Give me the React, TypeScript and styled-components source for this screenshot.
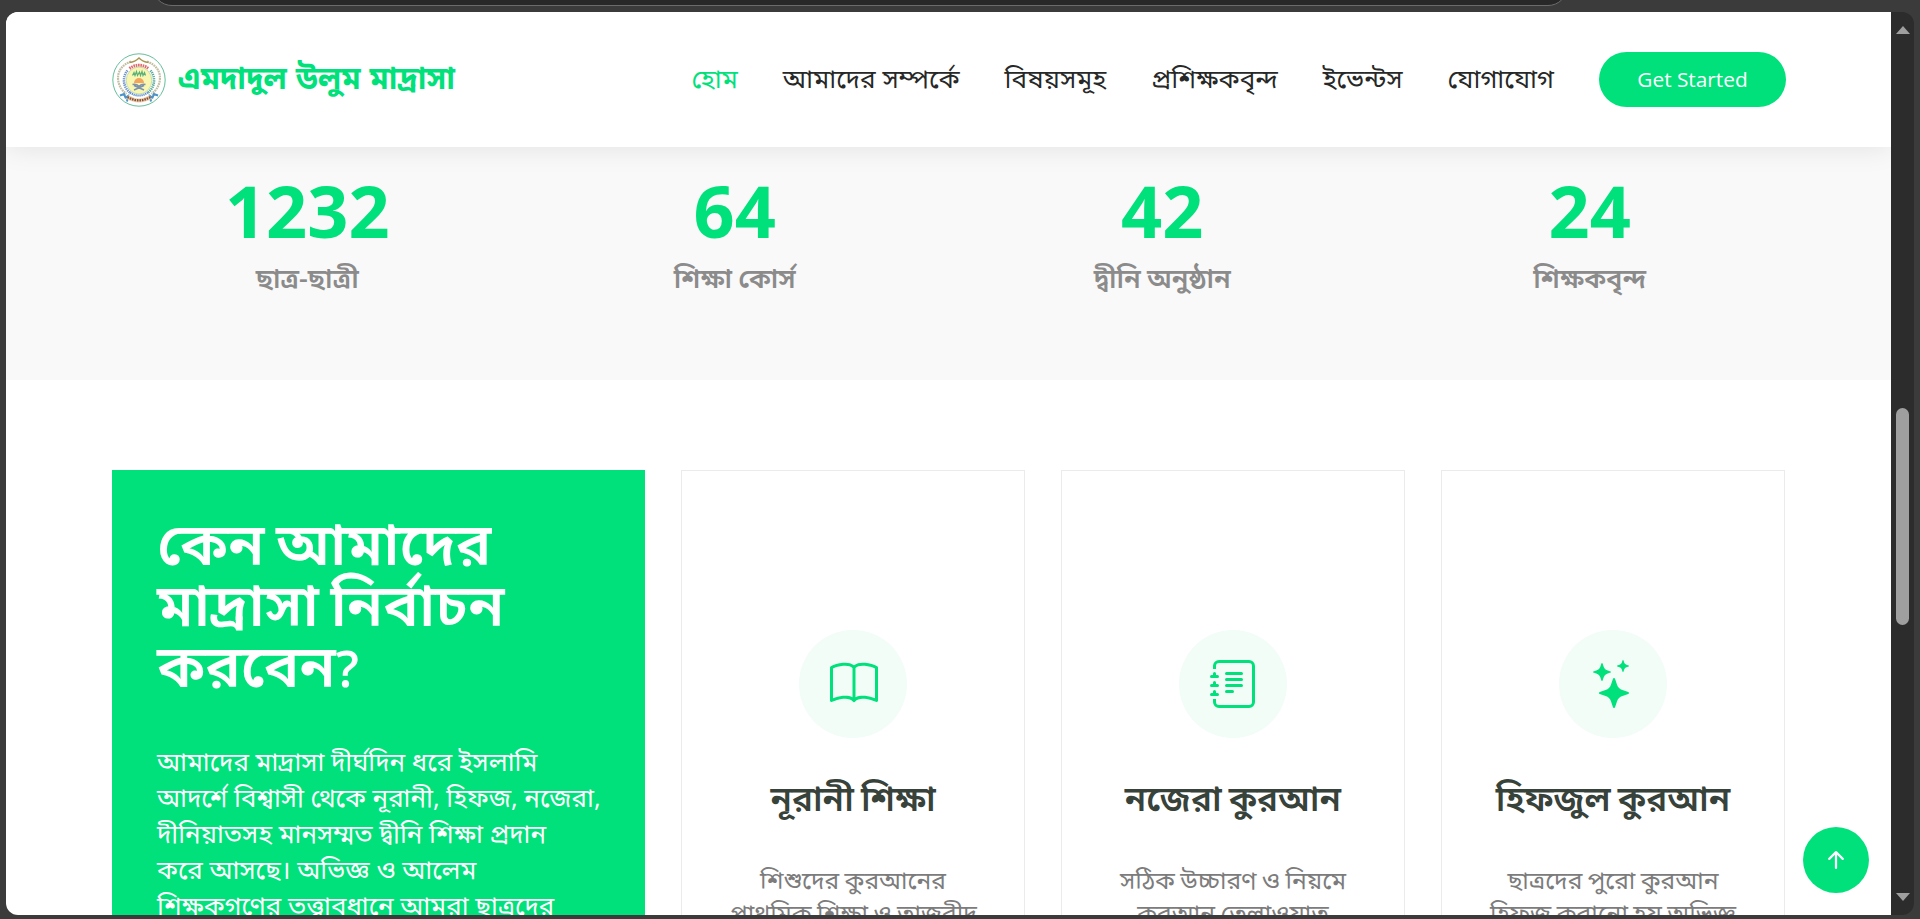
import React from "react";
import styled, { createGlobalStyle } from "styled-components";
import { BsArrowUpShort, BsBook, BsJournalText, BsStars } from "react-icons/bs";

const GREEN = "#00e17b";
const FONT = `"Open Sans", "Noto Sans Bengali", "Noto Sans", sans-serif`;

const GlobalStyle = createGlobalStyle`
  * { box-sizing: border-box; }
  body { margin: 0; background: #3b3b3b; font-family: ${FONT}; overflow: hidden; }
  h1, h3, h4, p { margin: 0; }
`;

const BrowserWindow = styled.div`
  display: flex;
  flex-direction: column;
  height: 919px;
  padding: 0 6px 4px;
  background: #3b3b3b;
`;

const AddressStrip = styled.div`
  flex: 0 0 12px;
  overflow: hidden;
  display: flex;
  align-items: flex-end;
  padding: 0 0 6px 146px;
`;

const AddressBar = styled.div`
  width: 1416px;
  height: 40px;
  border: 1px solid #6b6b6b;
  border-radius: 20px;
  background: #282828;
`;

const Viewport = styled.div`
  flex: 1;
  min-height: 0;
  display: flex;
  border-radius: 12px;
  overflow: hidden;
  background: #2c2c2c;
  width: 1908px;
`;

const Page = styled.main`
  position: relative;
  width: 1885px;
  height: 903px;
  overflow: hidden;
  background: #fff;
`;

const Header = styled.header`
  position: relative;
  z-index: 2;
  display: flex;
  align-items: center;
  height: 135px;
  padding: 0 105px 0 106px;
  background: #fff;
  box-shadow: 0 0 27px rgba(0, 0, 0, 0.1);
`;

const Brand = styled.a`
  display: flex;
  align-items: center;
  gap: 12px;
  margin-right: auto;
`;

const BrandName = styled.h1`
  padding-bottom: 6px;
  font-size: 30.8px;
  font-weight: 700;
  line-height: 36px;
  color: ${GREEN};
  white-space: nowrap;
  word-spacing: 1px;
`;

const Nav = styled.nav`
  display: flex;
  gap: 45px;
  padding-bottom: 4px;
`;

const NavLink = styled.a<{ $active?: boolean }>`
  font-size: 26.2px;
  line-height: 36px;
  font-weight: 400;
  white-space: nowrap;
  color: ${(p) => (p.$active ? GREEN : "#272828")};
`;

const StartButton = styled.a`
  margin-left: 45px;
  width: 187px;
  height: 55px;
  border-radius: 50px;
  background: ${GREEN};
  color: #fff;
  font-size: 20.8px;
  font-weight: 500;
  line-height: 55px;
  text-align: center;
`;

const Stats = styled.section`
  display: grid;
  grid-template-columns: repeat(4, 427.5px);
  justify-content: center;
  height: 233px;
  padding-top: 27px;
  background: #f9f9f9;
  text-align: center;
`;

const StatValue = styled.div`
  font-size: 72px;
  font-weight: 700;
  line-height: 72px;
  color: ${GREEN};
`;

const StatLabel = styled.p`
  margin-top: 14px;
  font-size: 27.3px;
  line-height: 36px;
  font-weight: 600;
  color: #8b8b8b;
  word-spacing: -1px;
`;

const WhySection = styled.section`
  display: grid;
  grid-template-columns: 533px repeat(3, 344px);
  gap: 36px;
  padding: 90px 0 0 106px;
`;

const WhyBox = styled.article`
  height: 560px;
  padding: 42px 45px 0;
  background: ${GREEN};
  color: #fff;
`;

const WhyTitle = styled.h3`
  margin-bottom: 47px;
  font-size: 59.4px;
  line-height: 61.2px;
  font-weight: 600;
  word-spacing: -4px;
  white-space: nowrap;
`;

const QuestionMark = styled.span`
  font-size: 51px;
  line-height: 1;
`;

const WhyText = styled.p`
  font-size: 25.9px;
  line-height: 36px;
  font-weight: 400;
  white-space: pre;
`;

const Card = styled.article`
  display: flex;
  flex-direction: column;
  align-items: center;
  height: 560px;
  padding-top: 159px;
  border: 1px solid #ebebeb;
  text-align: center;
`;

const CardIcon = styled.div`
  display: flex;
  align-items: center;
  justify-content: center;
  width: 108px;
  height: 108px;
  padding-left: 1px;
  border-radius: 50%;
  background: #f2fdf8;
  color: ${GREEN};
  font-size: 48px;
`;

const CardTitle = styled.h4`
  margin: 38px 0 43.500px;
  font-size: 35px;
  line-height: 43px;
  font-weight: 600;
  color: #37423b;
  white-space: nowrap;
  word-spacing: -2px;
`;

const CardText = styled.p`
  font-size: 24.6px;
  line-height: 33px;
  font-weight: 400;
  color: #7c7c7c;
  white-space: pre;
  word-spacing: -1px;
`;

const ScrollTop = styled.a`
  position: absolute;
  right: 22px;
  bottom: 22px;
  z-index: 3;
  display: flex;
  align-items: center;
  justify-content: center;
  width: 66px;
  height: 66px;
  border-radius: 50%;
  background: ${GREEN};
  color: #fff;
  font-size: 36px;
`;

const ScrollTrack = styled.div`
  display: flex;
  flex-direction: column;
  align-items: center;
  width: 23px;
  padding: 14px 0;
`;

const ScrollArrow = styled.div<{ $down?: boolean }>`
  border: 7.5px solid transparent;
  border-width: ${(p) => (p.$down ? "8px 7.5px 0" : "0 7.5px 8px")};
  border-color: ${(p) => (p.$down ? "#9f9f9f transparent transparent" : "transparent transparent #9f9f9f")};
  margin-top: ${(p) => (p.$down ? "auto" : "0")};
`;

const ScrollThumb = styled.div`
  width: 13px;
  height: 217px;
  margin-top: 374px;
  border-radius: 7px;
  background: #9f9f9f;
`;

const Emblem = () => (
  <svg width="54" height="54" viewBox="0 0 54 54" fill="none">
    <circle cx="27" cy="27" r="26.2" stroke="#55b58d" strokeWidth="0.9" />
    {/* laurel wreath and pointed arch */}
    <path d="M19 8.5C9 12 4.5 20 6.5 29c1 5 4 9 8 12M35 8.5C45 12 49.500 20 47.500 29c-1 5-4 9-8 12" stroke="#c3bfa4" strokeWidth="2.200" strokeDasharray="1.800 0.700" />
    <path d="M17.500 9.500c4-.4 7-2 9.500-4.500 2.500 2.500 5.500 4.100 9.500 4.500" stroke="#a8954a" strokeWidth="1.500" />
    {/* lettering rings */}
    <path d="M17.500 15.500a15.500 15.500 0 0 1 19 0" stroke="#e0696f" strokeWidth="3" strokeDasharray="1.600 0.700" />
    <path d="M15.500 17.500a15.500 15.500 0 0 0 3 22.500" stroke="#6d93c9" strokeWidth="2.600" strokeDasharray="1.300 0.800" />
    <path d="M38.500 17.500a15.500 15.500 0 0 1-3 22.500" stroke="#5ba99a" strokeWidth="2.600" strokeDasharray="1.300 0.800" />
    <path d="M18 39.500c6 4 12 4 18 0" stroke="#5f8fd0" strokeWidth="2.200" strokeDasharray="1.300 0.700" />
    <ellipse cx="27" cy="27.500" rx="12.800" ry="13.500" fill="#f8f6b0" stroke="#b9d7a4" strokeWidth="0.800" />
    {/* script, sun and book stand */}
    <path d="M20.500 22.500l1.500-3 1 3 1.500-4 1 4 2-3.500 1 3.500 1.500-4 1 4 1.500-3 1 3" stroke="#59b07b" strokeWidth="1.200" />
    <path d="M22 30a5 5 0 0 1 10 0z" fill="#f3a45f" />
    <path d="M20.500 31.500c2.500-.5 5 .3 6.500 2 1.500-1.700 4-2.500 6.500-2M22 37l10-4.500M32 37l-10-4.500" stroke="#7d93ab" strokeWidth="1.400" />
    {/* flowers and ribbon */}
    <path d="M8 42.500l4-1.500 1.500 3.500 2.500-1.500-1 5.500M46 42.500L42 41l-1.500 3.500L38 43l1 5.500" stroke="#4b93c9" strokeWidth="2" />
    <path d="M15.500 44c7.500 4.500 15.500 4.500 23 0" stroke="#f0d3ae" strokeWidth="4" />
    <path d="M15.500 44c7.500 4.500 15.500 4.500 23 0" stroke="#84503f" strokeWidth="2.400" strokeDasharray="1.600 0.900" />
  </svg>
);

const nav = ["হোম", "আমাদের সম্পর্কে", "বিষয়সমূহ", "প্রশিক্ষকবৃন্দ", "ইভেন্টস", "যোগাযোগ"];

const stats = [
  ["1232", "ছাত্র-ছাত্রী"],
  ["64", "শিক্ষা কোর্স"],
  ["42", "দ্বীনি অনুষ্ঠান"],
  ["24", "শিক্ষকবৃন্দ"],
];

const cards = [
  { icon: <BsBook />, title: "নূরানী শিক্ষা", text: "শিশুদের কুরআনের\nপ্রাথমিক শিক্ষা ও তাজবীদ" },
  { icon: <BsJournalText />, title: "নজেরা কুরআন", text: "সঠিক উচ্চারণ ও নিয়মে\nকুরআন তেলাওয়াত" },
  { icon: <BsStars />, title: "হিফজুল কুরআন", text: "ছাত্রদের পুরো কুরআন\nহিফজ করানো হয় অভিজ্ঞ" },
];

export default function App() {
  return (
    <BrowserWindow>
      <GlobalStyle />
      <AddressStrip><AddressBar /></AddressStrip>
      <Viewport>
        <Page>
          <Header>
            <Brand>
              <Emblem />
              <BrandName>এমদাদুল উলুম মাদ্রাসা</BrandName>
            </Brand>
            <Nav>
              {nav.map((label, i) => <NavLink key={label} $active={i === 0}>{label}</NavLink>)}
            </Nav>
            <StartButton>Get Started</StartButton>
          </Header>
          <Stats>
            {stats.map(([value, label]) => (
              <div key={value}>
                <StatValue>{value}</StatValue>
                <StatLabel>{label}</StatLabel>
              </div>
            ))}
          </Stats>
          <WhySection>
            <WhyBox>
              <WhyTitle>কেন আমাদের<br />মাদ্রাসা নির্বাচন<br />করবেন<QuestionMark>?</QuestionMark></WhyTitle>
              <WhyText>{"আমাদের মাদ্রাসা দীর্ঘদিন ধরে ইসলামি\nআদর্শে বিশ্বাসী থেকে নূরানী, হিফজ, নজেরা,\nদীনিয়াতসহ মানসম্মত দ্বীনি শিক্ষা প্রদান\nকরে আসছে। অভিজ্ঞ ও আলেম\nশিক্ষকগণের তত্ত্বাবধানে আমরা ছাত্রদের"}</WhyText>
            </WhyBox>
            {cards.map((c) => (
              <Card key={c.title}>
                <CardIcon>{c.icon}</CardIcon>
                <CardTitle>{c.title}</CardTitle>
                <CardText>{c.text}</CardText>
              </Card>
            ))}
          </WhySection>
          <ScrollTop><BsArrowUpShort /></ScrollTop>
        </Page>
        <ScrollTrack>
          <ScrollArrow />
          <ScrollThumb />
          <ScrollArrow $down />
        </ScrollTrack>
      </Viewport>
    </BrowserWindow>
  );
}
